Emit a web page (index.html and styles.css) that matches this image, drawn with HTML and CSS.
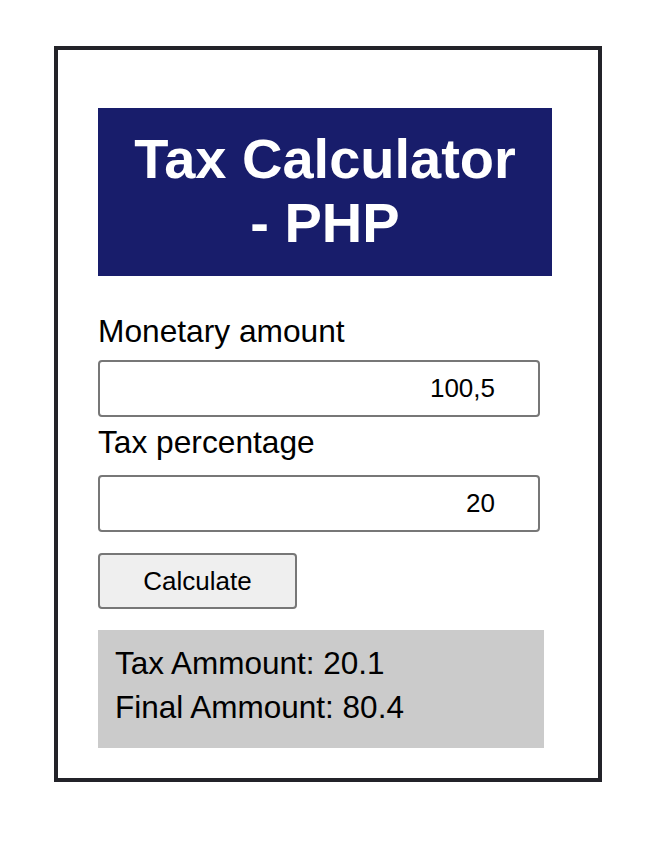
FILE: index.html
```html
<!DOCTYPE html>
<html lang="en">
<head>
<meta charset="utf-8">
<title>Tax Calculator - PHP</title>
<link rel="stylesheet" href="styles.css">
</head>
<body>
<div class="card">
  <h1 class="title">Tax Calculator - PHP</h1>
  <form class="form">
    <label class="label label-first" for="amount">Monetary amount</label>
    <input class="field field-first" id="amount" type="text" value="100,5">
    <label class="label label-second" for="tax">Tax percentage</label>
    <input class="field field-second" id="tax" type="text" value="20">
    <button class="btn" type="button">Calculate</button>
  </form>
  <div class="result">
    <p class="result-line">Tax Ammount: 20.1</p>
    <p class="result-line">Final Ammount: 80.4</p>
  </div>
</div>
</body>
</html>
```

FILE: styles.css
```css
html, body {
  margin: 0;
  padding: 0;
  background: #ffffff;
}

body {
  padding: 46px 0 0 54px;
  font-family: "Liberation Sans", Arial, Helvetica, sans-serif;
  color: #000000;
}

.card {
  box-sizing: border-box;
  width: 548px;
  border: 4px solid #232329;
  padding: 58px 0 30px 40px;
  display: flex;
  flex-direction: column;
  align-items: flex-start;
}

.title {
  box-sizing: border-box;
  width: 454px;
  margin: 0;
  padding: 19px 22px 21px;
  background: #181d6b;
  color: #ffffff;
  font-size: 56px;
  line-height: 64px;
  font-weight: bold;
  text-align: center;
}

.form {
  display: flex;
  flex-direction: column;
  align-items: flex-start;
  margin: 0;
}

.label {
  font-size: 31.7px;
  line-height: 36px;
}

.label-first {
  margin-top: 37px;
}

.label-second {
  margin-top: 7px;
}

.field {
  box-sizing: border-box;
  width: 442px;
  height: 57px;
  border: 2px solid #777777;
  border-radius: 4px;
  padding: 0 43px 0 10px;
  font-family: "Liberation Sans", Arial, Helvetica, sans-serif;
  font-size: 26px;
  color: #000000;
  text-align: right;
  background: #ffffff;
  outline: none;
}

.field-first {
  margin-top: 11px;
}

.field-second {
  margin-top: 15px;
}

.btn {
  box-sizing: border-box;
  width: 199px;
  height: 56px;
  margin-top: 21px;
  border: 2px solid #777777;
  border-radius: 4px;
  background: #efefef;
  font-family: "Liberation Sans", Arial, Helvetica, sans-serif;
  font-size: 26px;
  color: #000000;
  padding: 0;
}

.result {
  box-sizing: border-box;
  width: 446px;
  margin-top: 21px;
  padding: 11px 17px 19px;
  background: #cbcbcb;
}

.result-line {
  margin: 0;
  font-size: 31.5px;
  line-height: 44px;
}
```
